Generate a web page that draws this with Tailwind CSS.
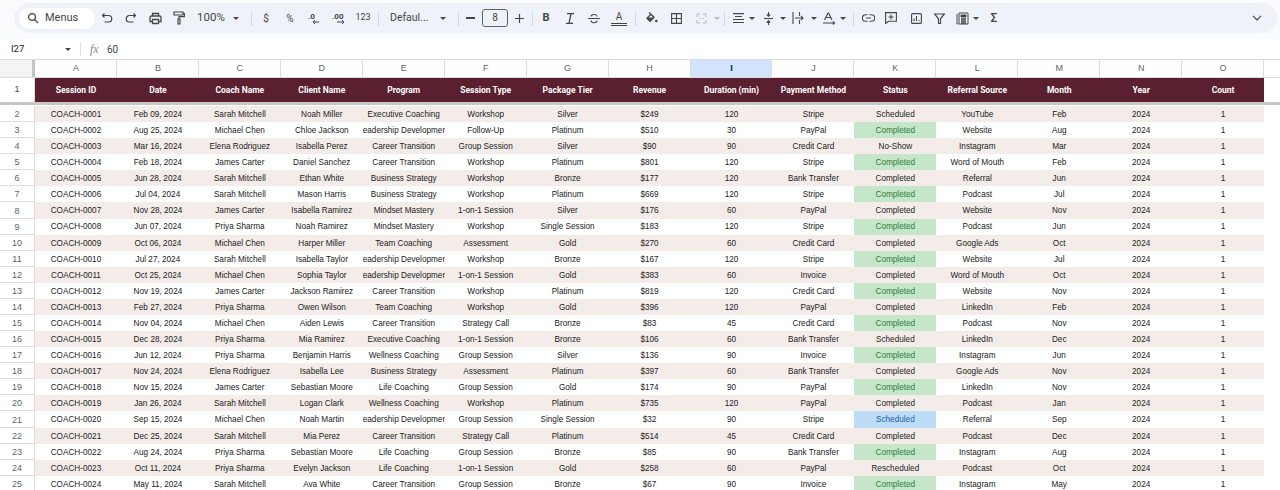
<!DOCTYPE html>
<html lang="en">

<head>
    <meta charset="UTF-8">
    <title>Coaching Sessions</title>
    <script src="https://cdn.jsdelivr.net/npm/@tailwindcss/browser@4"></script>
</head>

<body class="bg-white h-[490px] w-[1280px] overflow-hidden font-['Roboto',sans-serif] text-[#444746]">

    <!-- Toolbar -->
    <div class="bg-[#f9fbfd] h-[39px] pt-[3px] pl-[14px] pr-[3px]">
        <div class="h-[30px] bg-[#eff3f9] rounded-[15px] flex items-center pl-[5px] text-[#444746]">
            <div class="w-[76px] h-[21px] bg-white rounded-full flex items-center pl-[8px] gap-[6px] text-[11px]">
                <svg class="w-[12px] h-[12px]" viewBox="0 0 12 12" fill="none" stroke="#444746" stroke-width="1.3"><circle cx="5" cy="5" r="3.4"/><path d="M7.5 7.5 11 11"/></svg>
                <span>Menus</span>
            </div>
            <div class="w-[24px] flex justify-center"><svg class="w-[12px] h-[12px]" viewBox="0 0 12 12" fill="none" stroke="#444746" stroke-width="1.2"><path d="M3.5 1.5 1.5 3.5l2 2M1.5 3.5h6a2.6 2.6 0 0 1 0 6.5H3.5"/></svg></div>
            <div class="w-[24px] flex justify-center"><svg class="w-[12px] h-[12px]" viewBox="0 0 12 12" fill="none" stroke="#444746" stroke-width="1.2"><path d="M8.5 1.5l2 2-2 2M10.5 3.5h-6a2.6 2.6 0 0 0 0 6.5h4"/></svg></div>
            <div class="w-[24px] flex justify-center"><svg class="w-[13px] h-[13px]" viewBox="0 0 13 13" fill="none" stroke="#444746" stroke-width="1.3"><path d="M3.5 4V1.5h6V4M3.5 9.5H1V5.500a1.500 1.500 0 0 1 1.500-1.500h8A1.500 1.500 0 0 1 12 5.500v4H9.500"/><path d="M3.500 7.500h6v4h-6z"/></svg></div>
            <div class="w-[24px] flex justify-center"><svg class="w-[12px] h-[14px]" viewBox="0 0 12 14" fill="none" stroke="#444746" stroke-width="1.2"><path d="M1 1h9v3H1zM10 2.500h1.500v3.200H6v2.300"/><path d="M5 8h2v5H5z"/></svg></div>
            <div class="w-[57px] flex items-center pl-[6px] text-[11.5px]">100%<span class="ml-[8px] border-x-[3px] border-t-[3.5px] border-x-transparent border-t-[#444746]"></span></div>
            <div class="w-[6px] flex justify-center"><span class="w-px h-[15px] bg-[#d5d9de]"></span></div>
            <div class="w-[24px] text-center text-[10px]">$</div>
            <div class="w-[24px] text-center text-[10px]">%</div>
            <div class="w-[24px] flex justify-center"><svg class="w-[16px] h-[14px]" viewBox="0 0 16 14" fill="none" stroke="#444746"><text x="2" y="8" font-size="8" font-weight="700" fill="#444746" stroke="none" font-family="Roboto">.0</text><path d="M13 11H7M9 9l-2 2 2 2"/></svg></div>
            <div class="w-[25px] flex justify-center"><svg class="w-[18px] h-[14px]" viewBox="0 0 18 14" fill="none" stroke="#444746"><text x="2" y="8" font-size="8" font-weight="700" fill="#444746" stroke="none" font-family="Roboto">.00</text><path d="M7 11h7M12 9l2 2-2 2"/></svg></div>
            <div class="w-[24px] text-center text-[9px]">123</div>
            <div class="w-[6px] flex justify-center"><span class="w-px h-[15px] bg-[#d5d9de]"></span></div>
            <div class="w-[71px] flex items-center pl-[9px] text-[10.5px]">Defaul...<span class="ml-[12px] border-x-[3px] border-t-[3.5px] border-x-transparent border-t-[#444746]"></span></div>
            <div class="w-[12px] flex justify-center"><span class="w-px h-[15px] bg-[#d5d9de]"></span></div>
            <div class="w-[18px] flex justify-center pr-[6px]"><span class="w-[9px] h-[1.3px] bg-[#444746]"></span></div>
            <div class="w-[26px] h-[18px] border border-[#5f6368] rounded-[3px] text-center text-[10px] leading-[16px]">8</div>
            <div class="w-[23px] flex justify-center"><svg class="w-[9px] h-[9px]" viewBox="0 0 9 9" stroke="#444746" stroke-width="1.2"><path d="M0 4.500h9M4.500 0v9"/></svg></div>
            <div class="w-[3px] flex justify-center"><span class="w-px h-[15px] bg-[#d5d9de]"></span></div>
            <div class="w-[24px] text-center text-[11px] font-bold">B</div>
            <div class="w-[24px] flex justify-center"><svg class="w-[10px] h-[11px]" viewBox="0 0 10 11" fill="none" stroke="#444746" stroke-width="1.3"><path d="M2 .7h7M1 10.300h7M6 .7l-2 9.600"/></svg></div>
            <div class="w-[24px] flex justify-center"><svg class="w-[12px] h-[11px]" viewBox="0 0 12 11" fill="none" stroke="#444746" stroke-width="1.1"><path d="M0 5.500h12M3 3.500c0-2.500 6-3 6 0M3 7.500c0 3 6 3 6 0"/></svg></div>
            <div class="w-[26px] flex flex-col items-center text-[10px] leading-[11px]">A<span class="mt-[1px] w-[16px] h-[3px] border-y border-[#444746]"></span></div>
            <div class="w-[6px] flex justify-center"><span class="w-px h-[15px] bg-[#d5d9de]"></span></div>
            <div class="w-[26px] flex justify-center"><svg class="w-[13px] h-[13px]" viewBox="0 0 13 13" fill="#444746"><path d="M4.500 0 3.600.9l1.400 1.400L1 6.300l4 4 5-5zM5.900 3.200 8.200 5.500H3.500z"/><circle cx="11.300" cy="9" r="1.300"/></svg></div>
            <div class="w-[24px] flex justify-center"><svg class="w-[11px] h-[11px]" viewBox="0 0 11 11" fill="none" stroke="#444746" stroke-width="1.1"><path d="M.6.6h9.800v9.800H.6zM5.500.6v9.800M.6 5.500h9.800"/></svg></div>
            <div class="w-[26px] flex justify-center"><svg class="w-[11px] h-[11px]" viewBox="0 0 11 11" fill="none" stroke="#b8bcc1"><path d="M1 4V1h3M7 1h3v3M1 7v3h3M7 10h3V7M3 5.500h1.500M6.500 5.500H8"/></svg></div>
            <div class="w-[6px] flex justify-center"><span class="border-x-[3px] border-t-[3.5px] border-x-transparent border-t-[#b8bcc1]"></span></div>
            <div class="w-[8px] flex justify-center"><span class="w-px h-[15px] bg-[#d5d9de]"></span></div>
            <div class="w-[20px] flex justify-center"><svg class="w-[11px] h-[11px]" viewBox="0 0 11 11" stroke="#444746" stroke-width="1.1"><path d="M0 .6h11M2 3.500h7M0 6.500h11M0 9.500h11"/></svg></div>
            <div class="w-[8px] flex justify-center"><span class="border-x-[3px] border-t-[3.5px] border-x-transparent border-t-[#444746]"></span></div>
            <div class="w-[24px] flex justify-center"><svg class="w-[9px] h-[13px]" viewBox="0 0 9 13" fill="none" stroke="#444746" stroke-width="1.1"><path d="M0 6.500h9M4.500 0v4M2.800 2.500l1.700 1.700 1.700-1.700M4.500 13V9M2.800 10.500l1.700-1.700 1.700 1.700"/></svg></div>
            <div class="w-[6px] flex justify-center"><span class="border-x-[3px] border-t-[3.5px] border-x-transparent border-t-[#444746]"></span></div>
            <div class="w-[24px] flex justify-center"><svg class="w-[12px] h-[12px]" viewBox="0 0 12 12" fill="none" stroke="#444746" stroke-width="1.1"><path d="M1 0v12M7.500 0v4M7.500 8v4M3 6h8M9 4l2 2-2 2"/></svg></div>
            <div class="w-[8px] flex justify-center"><span class="border-x-[3px] border-t-[3.5px] border-x-transparent border-t-[#444746]"></span></div>
            <div class="w-[22px] flex justify-center"><svg class="w-[13px] h-[13px]" viewBox="0 0 13 13" fill="none" stroke="#444746" stroke-width="1.1"><path d="M1.500 8 5 1h.6L9 8M2.700 5.500h5.600M0 11h11M10 9.500l1.500 1.500-1.500 1.500"/></svg></div>
            <div class="w-[6px] flex justify-center"><span class="border-x-[3px] border-t-[3.5px] border-x-transparent border-t-[#444746]"></span></div>
            <div class="w-[14px] flex justify-center"><span class="w-px h-[15px] bg-[#d5d9de]"></span></div>
            <div class="w-[16px] flex justify-center"><svg class="w-[13px] h-[8px] shrink-0" viewBox="0 0 13 8" fill="none" stroke="#444746" stroke-width="1.1"><path d="M5.500.8H3.500a3.200 3.200 0 0 0 0 6.400h2M7.500.8h2a3.200 3.200 0 0 1 0 6.400h-2M4 4h5"/></svg></div>
            <div class="w-[30px] flex justify-center"><svg class="w-[12px] h-[12px]" viewBox="0 0 12 12" fill="none" stroke="#444746" stroke-width="1.1"><path d="M.6.6h10.800v8.600H3.500L.6 11.500zM6 2.500v5M3.500 5h5"/></svg></div>
            <div class="w-[20px] flex justify-center"><svg class="w-[11px] h-[11px]" viewBox="0 0 11 11" fill="none" stroke="#444746" stroke-width="1.1"><rect x=".6" y=".6" width="9.800" height="9.800" rx="1"/><path d="M3 8V5.500M5.500 8V3M8 8V7"/></svg></div>
            <div class="w-[26px] flex justify-center"><svg class="w-[11px] h-[11px]" viewBox="0 0 11 11" fill="none" stroke="#444746" stroke-width="1.2"><path d="M.6 1h9.800L6.500 5.800V10.500H4.500V5.800z"/></svg></div>
            <div class="w-[20px] flex justify-center"><svg class="w-[13px] h-[13px]" viewBox="0 0 13 13" fill="none" stroke="#444746"><path d="M1 2v10h1M3 1h9v11H3z"/><path d="M5 3h5v2H5z" fill="#444746"/><path d="M5 7h5M5 9h5M5 11h5" stroke-width="1.3"/></svg></div>
            <div class="w-[8px] flex justify-center"><span class="border-x-[3px] border-t-[3.5px] border-x-transparent border-t-[#444746]"></span></div>
            <div class="w-[28px] text-center text-[12px] font-medium">Σ</div>
            <div class="ml-auto mr-[15px] flex"><svg class="w-[10px] h-[6px]" viewBox="0 0 10 6" fill="none" stroke="#444746" stroke-width="1.2"><path d="M1 .8l4 4 4-4"/></svg></div>
        </div>
    </div>

    <!-- Formula bar -->
    <div class="h-[21px] bg-white border-b border-[#dadce0] flex items-center text-[9.5px]">
        <div class="w-[65px] pl-[11px] text-[#202124]">I27</div>
        <span class="border-x-[3px] border-t-[3.5px] border-x-transparent border-t-[#444746]"></span>
        <span class="ml-[9px] w-px h-[14px] bg-[#e0e2e5]"></span>
        <span class="ml-[9px] w-[17px] font-['Liberation_Serif',serif] italic text-[12px] text-[#8a8d91]">fx</span>
        <span class="text-[10px] text-[#444746]">60</span>
    </div>

    <!-- Sheet -->
    <div id="sheet"></div>

    <script>
        const cols = ['A', 'B', 'C', 'D', 'E', 'F', 'G', 'H', 'I', 'J', 'K', 'L', 'M', 'N', 'O'];
        const heads = ['Session ID', 'Date', 'Coach Name', 'Client Name', 'Program', 'Session Type', 'Package Tier', 'Revenue', 'Duration (min)', 'Payment Method', 'Status', 'Referral Source', 'Month', 'Year', 'Count'];
        const data = [
            'Feb 09, 2024|Sarah Mitchell|Noah Miller|Executive Coaching|Workshop|Silver|$249|120|Stripe|Scheduled|YouTube|Feb',
            'Aug 25, 2024|Michael Chen|Chloe Jackson|Leadership Development|Follow-Up|Platinum|$510|30|PayPal|Completed|Website|Aug',
            'Mar 16, 2024|Elena Rodriguez|Isabella Perez|Career Transition|Group Session|Silver|$90|90|Credit Card|No-Show|Instagram|Mar',
            'Feb 18, 2024|James Carter|Daniel Sanchez|Career Transition|Workshop|Platinum|$801|120|Stripe|Completed|Word of Mouth|Feb',
            'Jun 28, 2024|Sarah Mitchell|Ethan White|Business Strategy|Workshop|Bronze|$177|120|Bank Transfer|Completed|Referral|Jun',
            'Jul 04, 2024|Sarah Mitchell|Mason Harris|Business Strategy|Workshop|Platinum|$669|120|Stripe|Completed|Podcast|Jul',
            'Nov 28, 2024|James Carter|Isabella Ramirez|Mindset Mastery|1-on-1 Session|Silver|$176|60|PayPal|Completed|Website|Nov',
            'Jun 07, 2024|Priya Sharma|Noah Ramirez|Mindset Mastery|Workshop|Single Session|$183|120|Stripe|Completed|Podcast|Jun',
            'Oct 06, 2024|Michael Chen|Harper Miller|Team Coaching|Assessment|Gold|$270|60|Credit Card|Completed|Google Ads|Oct',
            'Jul 27, 2024|Sarah Mitchell|Isabella Taylor|Leadership Development|Workshop|Bronze|$167|120|Stripe|Completed|Website|Jul',
            'Oct 25, 2024|Michael Chen|Sophia Taylor|Leadership Development|1-on-1 Session|Gold|$383|60|Invoice|Completed|Word of Mouth|Oct',
            'Nov 19, 2024|James Carter|Jackson Ramirez|Career Transition|Workshop|Platinum|$819|120|Credit Card|Completed|Website|Nov',
            'Feb 27, 2024|Priya Sharma|Owen Wilson|Team Coaching|Workshop|Gold|$396|120|PayPal|Completed|LinkedIn|Feb',
            'Nov 04, 2024|Michael Chen|Aiden Lewis|Career Transition|Strategy Call|Bronze|$83|45|Credit Card|Completed|Podcast|Nov',
            'Dec 28, 2024|Priya Sharma|Mia Ramirez|Executive Coaching|1-on-1 Session|Bronze|$106|60|Bank Transfer|Scheduled|LinkedIn|Dec',
            'Jun 12, 2024|Priya Sharma|Benjamin Harris|Wellness Coaching|Group Session|Silver|$136|90|Invoice|Completed|Instagram|Jun',
            'Nov 24, 2024|Elena Rodriguez|Isabella Lee|Business Strategy|Assessment|Platinum|$397|60|Bank Transfer|Completed|Google Ads|Nov',
            'Nov 15, 2024|James Carter|Sebastian Moore|Life Coaching|Group Session|Gold|$174|90|PayPal|Completed|LinkedIn|Nov',
            'Jan 26, 2024|Sarah Mitchell|Logan Clark|Wellness Coaching|Workshop|Platinum|$735|120|PayPal|Completed|Podcast|Jan',
            'Sep 15, 2024|Michael Chen|Noah Martin|Leadership Development|Group Session|Single Session|$32|90|Stripe|Scheduled|Referral|Sep',
            'Dec 25, 2024|Sarah Mitchell|Mia Perez|Career Transition|Strategy Call|Platinum|$514|45|Credit Card|Completed|Podcast|Dec',
            'Aug 24, 2024|Priya Sharma|Sebastian Moore|Life Coaching|Group Session|Bronze|$85|90|Bank Transfer|Completed|Instagram|Aug',
            'Oct 11, 2024|Priya Sharma|Evelyn Jackson|Life Coaching|1-on-1 Session|Gold|$258|60|PayPal|Rescheduled|Podcast|Oct',
            'May 11, 2024|Sarah Mitchell|Ava White|Career Transition|Group Session|Bronze|$67|90|Invoice|Completed|Instagram|May'
        ];

        const gridCols = 'grid grid-cols-[35px_repeat(15,81.95px)_1fr]';
        let html = '';

        // column letters
        html += `<div class="${gridCols} h-[18px] border-b border-[#dadce0] text-[9px] text-[#5f6368] font-['Liberation_Sans',sans-serif]">`;
        html += '<div class="bg-[#f3f4f5] border-r-[3px] border-[#c4c6c9]"></div>';
        cols.forEach(c => {
            const on = c === 'I';
            html += `<div class="flex items-center justify-center pl-[1px] border-r border-[#dadce0] ${on ? 'bg-[#d3e3fd] font-bold text-[#0b1f42]' : 'bg-white'}">${c}</div>`;
        });
        html += '</div>';

        // frozen header row
        html += `<div class="${gridCols} h-[24px]">`;
        html += '<div class="flex items-center justify-center text-[9px] text-[#444746] border-r border-[#dadce0] font-[\'Liberation_Sans\',sans-serif]">1</div>';
        heads.forEach(h => {
            html += `<div class="bg-[#5a2030] text-white font-bold text-[8.5px] flex items-center justify-center font-['Roboto',sans-serif]">${h}</div>`;
        });
        html += '<div></div></div>';
        html += '<div class="h-[3px] bg-[#c7c7c7] mb-[1px]"></div>';

        // data rows
        data.forEach((line, i) => {
            const rowNo = i + 2;
            const tinted = rowNo % 2 === 0;
            const parts = line.split('|');
            const id = 'COACH-' + String(i + 1).padStart(4, '0');
            const cells = [id, ...parts, '2024', '1'];
            html += `<div class="${gridCols} h-[16.09px] text-[8.2px] leading-none text-[#222] font-['Liberation_Sans',sans-serif]">`;
            html += `<div class="flex items-center justify-center pt-[2px] text-[9px] text-[#5f6368] border-r border-b border-[#dadce0] bg-white">${rowNo}</div>`;
            cells.forEach((text, c) => {
                let bg = tinted ? 'bg-[#f3ece8]' : 'bg-white';
                if (c === 10 && !tinted && text === 'Completed') bg = 'bg-[#c5e6c9] text-[#2e7d3e]';
                if (c === 10 && !tinted && text === 'Scheduled') bg = 'bg-[#bcdcf8] text-[#1f5f9e]';
                html += `<div class="flex items-center justify-center pt-[2px] overflow-hidden whitespace-nowrap ${bg}"><span class="shrink-0">${text}</span></div>`;
            });
            html += '<div></div></div>';
        });

        document.getElementById('sheet').innerHTML = html;
    </script>
</body>

</html>
